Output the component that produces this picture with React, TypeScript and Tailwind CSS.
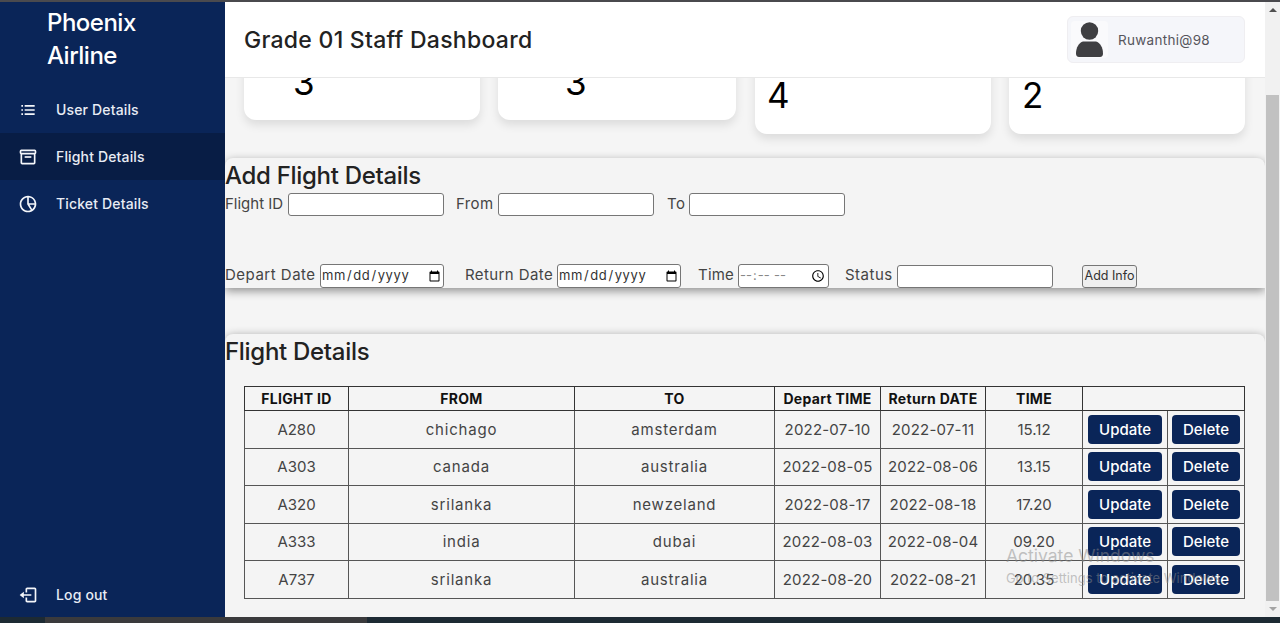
import { BiListUl, BiBox, BiPieChartAlt2, BiLogOut } from 'react-icons/bi';

const FONT = "font-['Inter','Liberation_Sans',sans-serif]";

const FLIGHTS = [
  ['A280', 'chichago', 'amsterdam', '2022-07-10', '2022-07-11', '15.12'],
  ['A303', 'canada', 'australia', '2022-08-05', '2022-08-06', '13.15'],
  ['A320', 'srilanka', 'newzeland', '2022-08-17', '2022-08-18', '17.20'],
  ['A333', 'india', 'dubai', '2022-08-03', '2022-08-04', '09.20'],
  ['A737', 'srilanka', 'australia', '2022-08-20', '2022-08-21', '20.35'],
];

const HEADINGS = ['FLIGHT ID', 'FROM', 'TO', 'Depart TIME', 'Return DATE', 'TIME', ''];

// per column letter spacing, the names run wider than the codes
const CELL_TRACKING = ['', 'tracking-[0.8px]', 'tracking-[0.8px]', 'tracking-[0.2px]', 'tracking-[0.2px]', ''];

const inputClass = 'h-[23px] bg-white border border-[#767676] rounded-[3px] text-[13px] text-[#333] px-0 tracking-[0.6px]';

function NavItem({ icon, label, active }: { icon: React.ReactNode; label: string; active?: boolean }) {
  return (
    <div className={`flex items-center h-[47px] pl-[18px] ${active ? 'bg-[#081d45]' : ''}`}>
      <span className="w-[38px] text-[20px] text-[#f4f6fa]">{icon}</span>
      <span className="text-[14px] font-medium text-[#e8ecf4] tracking-[0.15px]">{label}</span>
    </div>
  );
}

function Sidebar() {
  return (
    <aside className="w-[225px] shrink-0 bg-[#0a2558] flex flex-col">
      <div className="pl-[47px] pt-[4px] h-[84px] text-[24px] leading-[33px] font-medium text-white tracking-[-0.5px]">
        <div>Phoenix</div>
        <div>Airline</div>
      </div>
      <NavItem icon={<BiListUl />} label="User Details" />
      <NavItem icon={<BiBox />} label="Flight Details" active />
      <NavItem icon={<BiPieChartAlt2 />} label="Ticket Details" />
      <div className="mt-auto mb-[-1px]">
        <NavItem icon={<BiLogOut />} label="Log out" />
      </div>
    </aside>
  );
}

function Header() {
  return (
    <header className="relative z-10 h-[76px] shrink-0 bg-white border-b border-[#e8e8e8] flex items-center justify-between pl-[19px] pr-[20px]">
      <h1 className="pt-[2px] text-[23px] font-medium text-[#222] tracking-[0.27px]">Grade 01 Staff Dashboard</h1>
      <div className="w-[178px] h-[47px] bg-[#f5f6fa] border border-[#efeef1] rounded-[6px] flex items-center pl-[3px]">
        <div className="w-[37px] h-[37px] bg-[#fafafc] rounded-[4px] flex items-center justify-center">
          <svg width="27" height="35" viewBox="0 0 27 35" fill="#3f3f42">
            <circle cx="13.5" cy="9" r="8.7" />
            <path d="M7 19.5h13c4 1 7 6 7 12 0 2-1 3.500-3 3.500H3c-2 0-3-1.500-3-3.500 0-6 3-11 7-12z" />
          </svg>
        </div>
        <span className="ml-[10px] pt-px text-[13.5px] text-[#55555c] tracking-[0.3px]">Ruwanthi@98</span>
      </div>
    </header>
  );
}

function StatCards() {
  const cardClass = 'bg-white rounded-[12px] shadow-[0_5px_10px_rgba(0,0,0,0.1)] text-[35px] leading-[40px] text-black font-[\'Liberation_Sans\',sans-serif]';
  return (
    <div className="flex items-start gap-[18px] pl-[19px] pr-[20px] -mt-[41px]">
      <div className={`${cardClass} w-[236px] h-[83px] pl-[49px] pt-[25px]`}>3</div>
      <div className={`${cardClass} w-[238px] h-[83px] pl-[67px] pt-[25px]`}>3</div>
      <div className={`${cardClass} w-[236px] h-[97px] pl-[12px] pt-[38px] ml-px`}>4</div>
      <div className={`${cardClass} w-[236px] h-[97px] pl-[13px] pt-[38px]`}>2</div>
    </div>
  );
}

function AddFlightForm() {
  return (
    <section className="mt-[24px] h-[130px] bg-[#f4f4f4] rounded-t-[8px] shadow-[0_3px_10px_rgba(0,0,0,0.42)] text-[15px] text-[#444]">
      <h2 className="h-[35px] pt-[2px] text-[24px] leading-[32px] font-medium text-[#222] tracking-[-0.3px]">Add Flight Details</h2>
      <div className="flex items-center h-[23px]">
        <label className="w-[63px] pb-px">Flight ID</label>
        <input className={`${inputClass} w-[156px]`} />
        <label className="w-[42px] ml-[12px] pb-px tracking-[0.4px]">From</label>
        <input className={`${inputClass} w-[156px]`} />
        <label className="w-[22px] ml-[13px] pb-px tracking-[0.4px]">To</label>
        <input className={`${inputClass} w-[156px]`} />
      </div>
      <div className="flex items-center h-[24px] mt-[48px]">
        <label className="w-[95px] pb-[2px] whitespace-nowrap tracking-[0.5px]">Depart Date</label>
        <input type="date" className={`${inputClass} w-[124px] h-[24px]`} />
        <label className="w-[92px] ml-[21px] pb-[2px] whitespace-nowrap tracking-[0.4px]">Return Date</label>
        <input type="date" className={`${inputClass} w-[124px] h-[24px]`} />
        <label className="w-[40px] ml-[17px] pb-[2px] tracking-[0.2px]">Time</label>
        <input type="time" className={`${inputClass} w-[91px] h-[24px] !text-[#888]`} />
        <label className="w-[52px] ml-[16px] pb-[2px] tracking-[0.5px]">Status</label>
        <input className={`${inputClass} w-[156px] h-[23px]`} />
        <button className="ml-[29px] w-[55px] h-[23px] bg-[#efefef] border border-[#767676] rounded-[3px] text-[12.5px] text-[#333] whitespace-nowrap">
          Add Info
        </button>
      </div>
    </section>
  );
}

function FlightTable() {
  return (
    <section className="mt-[46px] h-[300px] bg-[#f4f4f4] rounded-t-[8px] shadow-[0_1px_8px_rgba(0,0,0,0.32)]">
      <h2 className="h-[52px] pt-[1px] text-[24px] leading-[34px] font-medium text-[#222] tracking-[-0.3px]">Flight Details</h2>
      <table className="ml-[19px] w-[1000px] table-fixed border-collapse border border-[#222] text-[15px] text-[#444] text-center">
        <colgroup>
          <col className="w-[104px]" />
          <col className="w-[226px]" />
          <col className="w-[200px]" />
          <col className="w-[106px]" />
          <col className="w-[105px]" />
          <col className="w-[97px]" />
          <col className="w-[85px]" />
          <col className="w-[77px]" />
        </colgroup>
        <thead>
          <tr className="h-[24px]">
            {HEADINGS.map((h, i) => (
              <th
                key={i}
                colSpan={i === 6 ? 2 : 1}
                className="border border-[#333] text-[14px] font-bold text-[#111] whitespace-nowrap p-0 tracking-[0.3px]"
              >
                {h}
              </th>
            ))}
          </tr>
        </thead>
        <tbody>
          {FLIGHTS.map(row => (
            <tr key={row[0]} className="h-[37.5px]">
              {row.map((cell, i) => (
                <td key={i} className={`border border-[#555] p-0 pt-px ${CELL_TRACKING[i]}`}>{cell}</td>
              ))}
              <td className="border border-[#555] p-0">
                <button className="w-[74px] h-[29px] pt-px bg-[#0a2558] rounded-[4px] text-white font-medium text-[15px] align-middle">Update</button>
              </td>
              <td className="border border-[#555] p-0">
                <button className="w-[68px] h-[29px] pt-px bg-[#0a2558] rounded-[4px] text-white font-medium text-[15px] align-middle">Delete</button>
              </td>
            </tr>
          ))}
        </tbody>
      </table>
    </section>
  );
}

function Scrollbar() {
  return (
    <div className="w-[15px] shrink-0 bg-[#f1f1f1] flex flex-col items-center pt-[6px] pb-[6px]">
      <div className="w-0 h-0 border-x-[4px] border-x-transparent border-b-[4px] border-b-[#505050]" />
      <div className="w-[13px] h-[506px] mt-[83px] bg-[#c1c1c1]" />
      <div className="mt-auto w-0 h-0 border-x-[4px] border-x-transparent border-t-[4px] border-t-[#a3a3a3]" />
    </div>
  );
}

export default function App() {
  return (
    <div className={`${FONT} relative w-[1280px] h-[623px] overflow-hidden flex flex-col bg-[#1d2a33]`}>
      <div className="h-[2px] shrink-0 bg-[#4a4a4e]" />
      <div className="flex flex-1 min-h-0">
        <Sidebar />
        <main className="flex-1 min-w-0 flex flex-col bg-[#f5f5f5] overflow-hidden">
          <Header />
          <div className="flex-1 min-h-0 overflow-hidden">
            <StatCards />
            <AddFlightForm />
            <FlightTable />
          </div>
        </main>
        <Scrollbar />
      </div>
      <div className="h-[6px] shrink-0 flex">
        <div className="w-[45px] bg-[#1d2a33]" />
        <div className="w-[322px] bg-[#3a3a3c]" />
      </div>
      {/* windows watermark */}
      <div className="absolute left-[1006px] top-[545px] text-[#8a8a8a]/50 pointer-events-none whitespace-nowrap">
        <div className="text-[17.5px] leading-[22px]">Activate Windows</div>
        <div className="text-[13px] leading-[20px] mt-[1px]">Go to Settings to activate Windows.</div>
      </div>
    </div>
  );
}
